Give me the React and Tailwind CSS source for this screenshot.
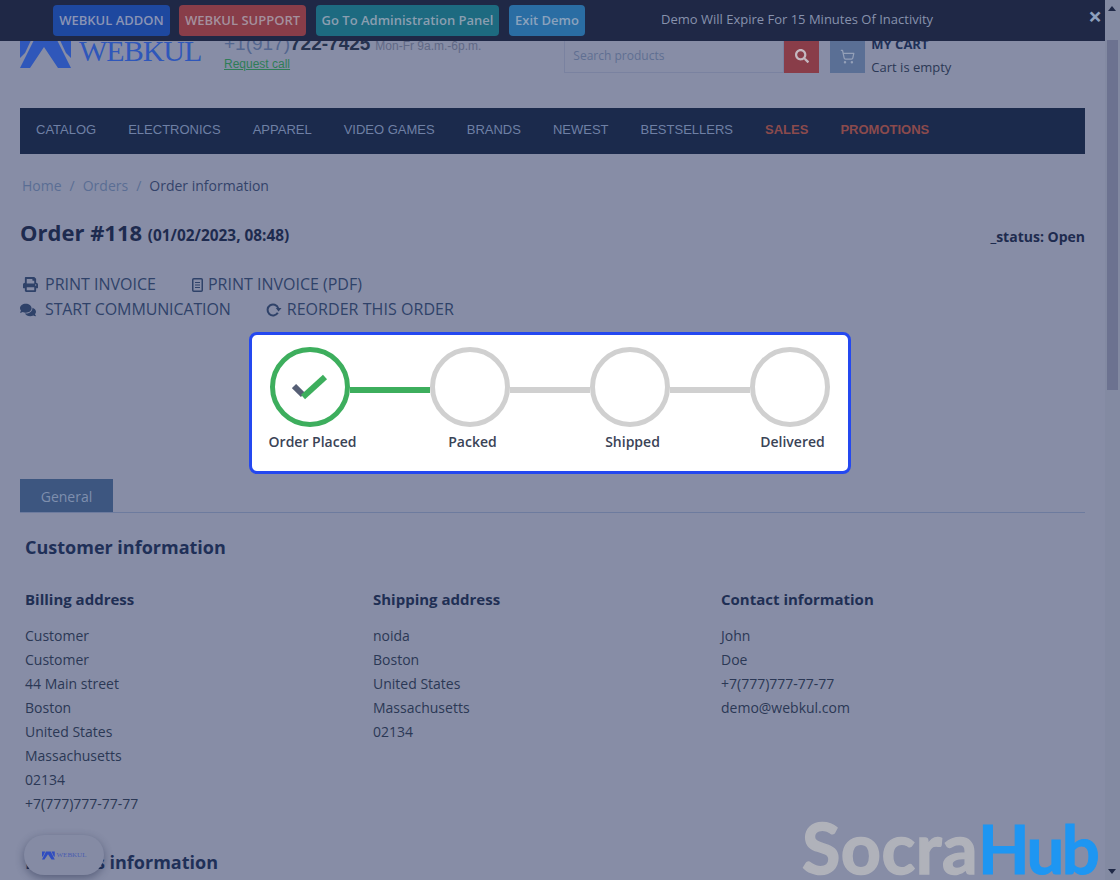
import { ShoppingCart } from "lucide-react";
import { FaPrint, FaComments, FaSearch } from "react-icons/fa";

const navItems = ["CATALOG", "ELECTRONICS", "APPAREL", "VIDEO GAMES", "BRANDS", "NEWEST", "BESTSELLERS"];
const billing = ["Customer", "Customer", "44 Main street", "Boston", "United States", "Massachusetts", "02134", "+7(777)777-77-77"];
const shipping = ["noida", "Boston", "United States", "Massachusetts", "02134"];
const contact = ["John", "Doe", "+7(777)777-77-77", "demo@webkul.com"];
const steps = ["Order Placed", "Packed", "Shipped", "Delivered"];

const LogoMark = ({ className }) => (
  <svg viewBox="0 0 52 32" className={className} fill="currentColor">
    <polygon points="0,0 13,0 5,17 0,22" />
    <polygon points="51,0 38,0 46,17 51,22" />
    <polygon points="16,0 35,0 51,32 38,32 24,11 10,32 0,32" />
  </svg>
);

const AddressColumn = ({ title, lines }) => (
  <div className="w-[348px]">
    <h3 className="h-[22px] text-[15px] leading-[20px] font-bold text-[#1f2f54]">{title}</h3>
    <div className="mt-[13px] text-sm leading-6 text-[#2b3855]">
      {lines.map((line, i) => (
        <div key={i}>{line}</div>
      ))}
    </div>
  </div>
);

export default function App() {
  return (
    <div className="relative flex h-[880px] w-[1120px] overflow-hidden bg-[#878da6] font-['Open_Sans',sans-serif]">
      <div className="w-[1105px]">
        {/* Demo bar */}
        <div className="relative z-10 flex h-[41px] items-start bg-[#1f2846] pt-[5px] pl-[53px]">
          <a className="flex h-[31px] w-[117px] items-center justify-center rounded-sm bg-[#1e489f] text-[13px] font-semibold text-[#8a94b5]">WEBKUL ADDON</a>
          <a className="ml-[9px] flex h-[31px] w-[127px] items-center justify-center rounded-sm bg-[#883d49] text-[13px] font-semibold text-[#a4909d]">WEBKUL SUPPORT</a>
          <a className="ml-[10px] flex h-[31px] w-[183px] items-center justify-center rounded-sm bg-[#1d6a80] text-[13px] font-semibold text-[#8a9eb0]">Go To Administration Panel</a>
          <a className="ml-[10px] flex h-[31px] w-[76px] items-center justify-center rounded-sm bg-[#2a6da3] text-[13px] font-semibold text-[#8ba2bd]">Exit Demo</a>
          <span className="ml-[76px] mt-[1px] text-[13px] leading-[26px] text-[#8792ad]">Demo Will Expire For 15 Minutes Of Inactivity</span>
          <span className="absolute top-0 right-[3px] text-[24px] leading-[32px] font-bold text-[#8ea0bd]">×</span>
        </div>

        {/* Header, scrolled under the bar */}
        <div className="flex h-[67px] pl-5">
          <div className="relative -mt-[5px] flex h-8 w-[204px] text-[#2f57ba]">
            <LogoMark className="h-8 w-[52px] flex-none" />
            <span className="-mt-[3px] ml-[7px] font-['Liberation_Serif',serif] text-[30px] leading-[36px] tracking-[-1px]">WEBKUL</span>
          </div>
          <div className="-mt-[9px] font-['Liberation_Sans',sans-serif]">
            <div className="whitespace-nowrap text-[#53668f]">
              <span className="text-[19px] leading-[24px]">+1(917)</span>
              <span className="text-[19px] leading-[24px] font-bold text-[#26334f]">722-7425</span>
              <span className="ml-[5px] text-xs text-[#5f6885]">Mon-Fr 9a.m.-6p.m.</span>
            </div>
            <a className="-mt-[2px] block text-xs leading-[18px] text-[#2f7d57] underline">Request call</a>
          </div>
          <div className="-mt-[2px] ml-[83px] flex h-[34px] w-[255px]">
            <div className="flex flex-1 items-center border border-[#7a82a0] pl-2 text-xs text-[#5f6f92]">Search products</div>
            <div className="flex w-[35px] items-center justify-center bg-[#893d49] text-[#c4b8c0]">
              <FaSearch size={14} />
            </div>
          </div>
          <div className="-mt-[2px] ml-[11px] flex h-[34px] w-[35px] items-center justify-center bg-[#5a6f95] text-[#94a0b8]">
            <ShoppingCart size={15} />
          </div>
          <div className="-mt-[9px] ml-[6px] text-[13px]">
            <div className="h-6 text-[13px] leading-[24px] font-bold text-[#1e3058]">MY CART</div>
            <div className="leading-[22px] text-[#2b3855]">Cart is empty</div>
          </div>
        </div>

        {/* Main menu */}
        <nav className="ml-5 flex h-[46px] w-[1065px] items-center gap-8 bg-[#1b2a4c] pb-[2px] pl-4 font-['Liberation_Sans',sans-serif] text-[13px] text-[#6f80a5]">
          {navItems.map((item) => (
            <span key={item}>{item}</span>
          ))}
          <span className="font-bold text-[#8b4a4c]">SALES</span>
          <span className="font-bold text-[#8b4a4c]">PROMOTIONS</span>
        </nav>

        <main className="px-5">
          <div className="mt-5 flex h-6 items-center pl-[2px] text-sm text-[#5a6d94]">
            <span>Home</span>
            <span className="mx-2">/</span>
            <span>Orders</span>
            <span className="mx-2">/</span>
            <span className="text-[#33436a]">Order information</span>
          </div>

          <div className="mt-5 flex h-[30px] items-center justify-between">
            <h1 className="mb-[2px] text-[22px] font-bold text-[#1e2b4f]">
              Order #118 <span className="text-[15.4px]">(01/02/2023, 08:48)</span>
            </h1>
            <span className="mt-2 text-sm font-bold text-[#1e2b4f]">_status: Open</span>
          </div>

          <div className="mt-6 text-base leading-[25px] text-[#2f4269]">
            <div className="flex h-[25px] items-center">
              <FaPrint size={15} className="ml-[3px]" />
              <span className="ml-[7px]">PRINT INVOICE</span>
              <svg width="11" height="14" viewBox="0 0 11 14" fill="none" stroke="currentColor" className="ml-[36px]">
                <rect x="0.75" y="0.75" width="9.5" height="12.5" rx="1" strokeWidth="1.5" />
                <path d="M3 4.5H8M3 7H8M3 9.5H8" strokeWidth="1.2" />
              </svg>
              <span className="ml-[5px]">PRINT INVOICE (PDF)</span>
            </div>
            <div className="flex h-[25px] items-center">
              <FaComments size={16} />
              <span className="ml-[9px] tracking-[-0.12px]">START COMMUNICATION</span>
              <svg width="16" height="16" viewBox="0 0 16 16" fill="none" className="ml-[35px]">
                <path d="M12.2 6A5.5 5.5 0 1 0 11.8 10.8" stroke="currentColor" strokeWidth="2" />
                <polygon points="9.8,6 15.5,6 12.6,9.6" fill="currentColor" />
              </svg>
              <span className="ml-[5px] tracking-[0.05px]">REORDER THIS ORDER</span>
            </div>
          </div>

          {/* Order progress */}
          <div className="mt-[10px] ml-[229px] flex h-[142px] w-[602px] rounded-lg border-[3px] border-[#2448f0] bg-white pt-3 pl-[18px]">
            {steps.map((label, i) => (
              <div key={label} className="flex">
                <div className="flex w-20 flex-col items-center">
                  <div className={`flex h-20 w-20 flex-none items-center justify-center rounded-full border-[5px] ${i === 0 ? "border-[#3dae5d]" : "border-[#d0d0d0]"}`}>
                    {i === 0 && (
                      <svg width="36" height="28" viewBox="0 0 36 28" fill="none" strokeWidth="6">
                        <path d="M2 13 L11 22" stroke="#565f75" />
                        <path d="M11 24 L33 4" stroke="#3dae5d" />
                      </svg>
                    )}
                  </div>
                  <span className="mt-[4px] ml-[5px] whitespace-nowrap text-sm leading-[22px] font-semibold text-[#3a4356]">{label}</span>
                </div>
                {i < 3 && <div className={`mt-10 h-1.5 w-20 ${i === 0 ? "bg-[#3dae5d]" : "bg-[#d0d0d0]"}`} />}
              </div>
            ))}
          </div>

          {/* Tab */}
          <div className="mt-[5px] h-[34px] border-b border-[#6d7b9e]">
            <div className="flex h-[33px] w-[93px] items-center justify-center bg-[#3d5680] pt-[2px] text-sm text-[#7f8fae]">General</div>
          </div>

          <div className="pl-[5px]">
            <h2 className="mt-[21px] h-[26px] text-lg leading-[26px] font-bold text-[#1f3058]">Customer information</h2>
            <div className="mt-[29px] flex">
              <AddressColumn title="Billing address" lines={billing} />
              <AddressColumn title="Shipping address" lines={shipping} />
              <AddressColumn title="Contact information" lines={contact} />
            </div>
            <h2 className="mt-[33px] h-[26px] text-lg leading-[26px] font-bold text-[#1f3058]">Products information</h2>
          </div>
        </main>
      </div>

      {/* Scrollbar */}
      <div className="relative w-[15px] bg-[#838aa2]">
        <div className="absolute top-[6px] left-[3px] h-0 w-0 border-x-[4px] border-b-[5px] border-x-transparent border-b-[#1f2846]" />
        <div className="absolute top-[40px] left-[2px] h-[350px] w-[11px] bg-[#6c7290]" />
        <div className="absolute bottom-[6px] left-[3px] h-0 w-0 border-x-[4px] border-t-[5px] border-x-transparent border-t-[#1f2846]" />
      </div>

      {/* Floating brand pill */}
      <div className="absolute bottom-[5px] left-[24px] z-10 flex h-10 w-20 items-center justify-center gap-[2px] rounded-[20px] bg-[#858ba4] shadow-[0_3px_8px_rgba(30,40,70,0.45)]">
        <LogoMark className="h-[9px] w-[13px] flex-none text-[#2f4cc0]" />
        <span className="font-['Liberation_Serif',serif] text-[7px] text-[#4a5cb0]">WEBKUL</span>
      </div>

      {/* Watermark */}
      <div className="pointer-events-none absolute top-[814px] left-[802px] font-['Lato',sans-serif] text-[70px] leading-[66px] font-bold whitespace-nowrap">
        <span className="tracking-[0.5px] text-[#b0b2ba] [-webkit-text-stroke:1.5px_#b0b2ba]">Socra</span>
        <span className="text-[67px] tracking-[-2.5px] text-[#1e96f2] [-webkit-text-stroke:1px_#1e96f2]">Hub</span>
      </div>
    </div>
  );
}
